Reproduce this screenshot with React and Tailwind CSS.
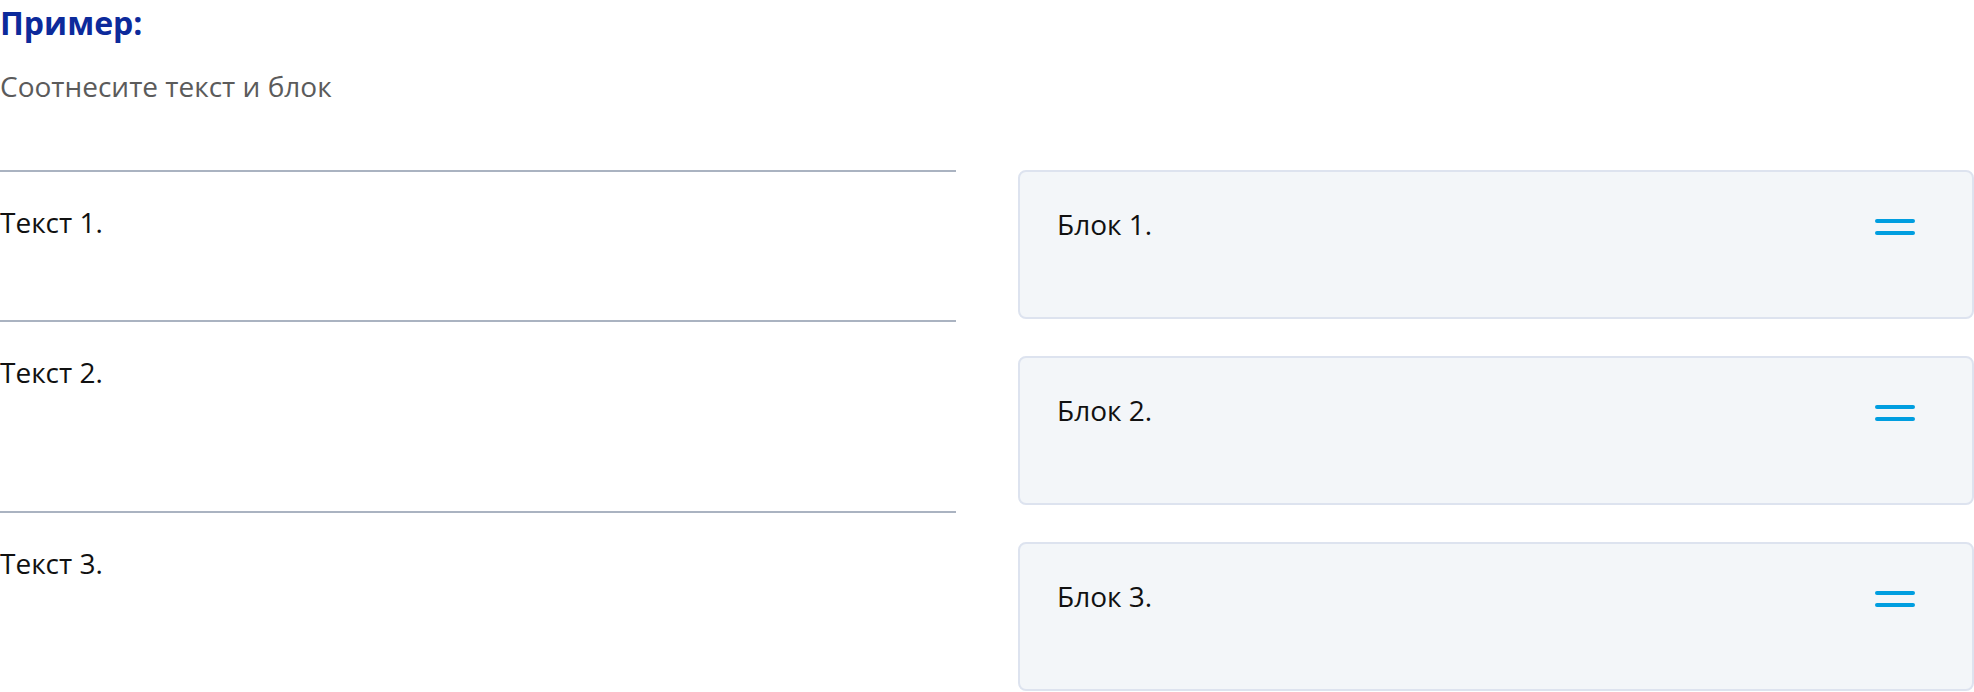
import React from "react";

const rows = [
  { text: "Текст 1.", h: "h-[150px]" },
  { text: "Текст 2.", h: "h-[191px]" },
  { text: "Текст 3.", h: "h-[200px]" },
];

const blocks = ["Блок 1.", "Блок 2.", "Блок 3."];

function DragHandle() {
  return (
    <div className="flex flex-col gap-[8px] w-[40px] mt-[14px]">
      <span className="block h-[4px] w-full rounded-full bg-[#009ee0]" />
      <span className="block h-[4px] w-full rounded-full bg-[#009ee0]" />
    </div>
  );
}

export default function App() {
  return (
    <div
      className="w-full h-[692px] overflow-hidden bg-white text-[#111]"
      style={{ fontFamily: '"Open Sans", "Noto Sans", sans-serif' }}
    >
      <h2 className="pt-[1px] text-[32px] leading-[44px] font-bold text-[#0c2a9b]">
        Пример:
      </h2>
      <p className="mt-[22px] text-[28px] leading-[38px] text-[#5b5b5b]">
        Соотнесите текст и блок
      </p>

      <div className="mt-[65px] grid grid-cols-2 gap-x-[62px]">
        {/* left column: statements */}
        <div className="flex flex-col">
          {rows.map((row) => (
            <div
              key={row.text}
              className={`${row.h} border-t-2 border-[#aab3c1] pt-[31px] text-[28px] leading-[38px]`}
            >
              {row.text}
            </div>
          ))}
        </div>

        {/* right column: draggable blocks */}
        <div className="flex flex-col gap-[37px]">
          {blocks.map((b) => (
            <div
              key={b}
              className="h-[149px] flex items-start justify-between rounded-[8px] border-2 border-[#dde3ef] bg-[#f3f6f9] pt-[33px] pl-[37px] pr-[57px]"
            >
              <span className="text-[28px] leading-[38px]">{b}</span>
              <DragHandle />
            </div>
          ))}
        </div>
      </div>
    </div>
  );
}
